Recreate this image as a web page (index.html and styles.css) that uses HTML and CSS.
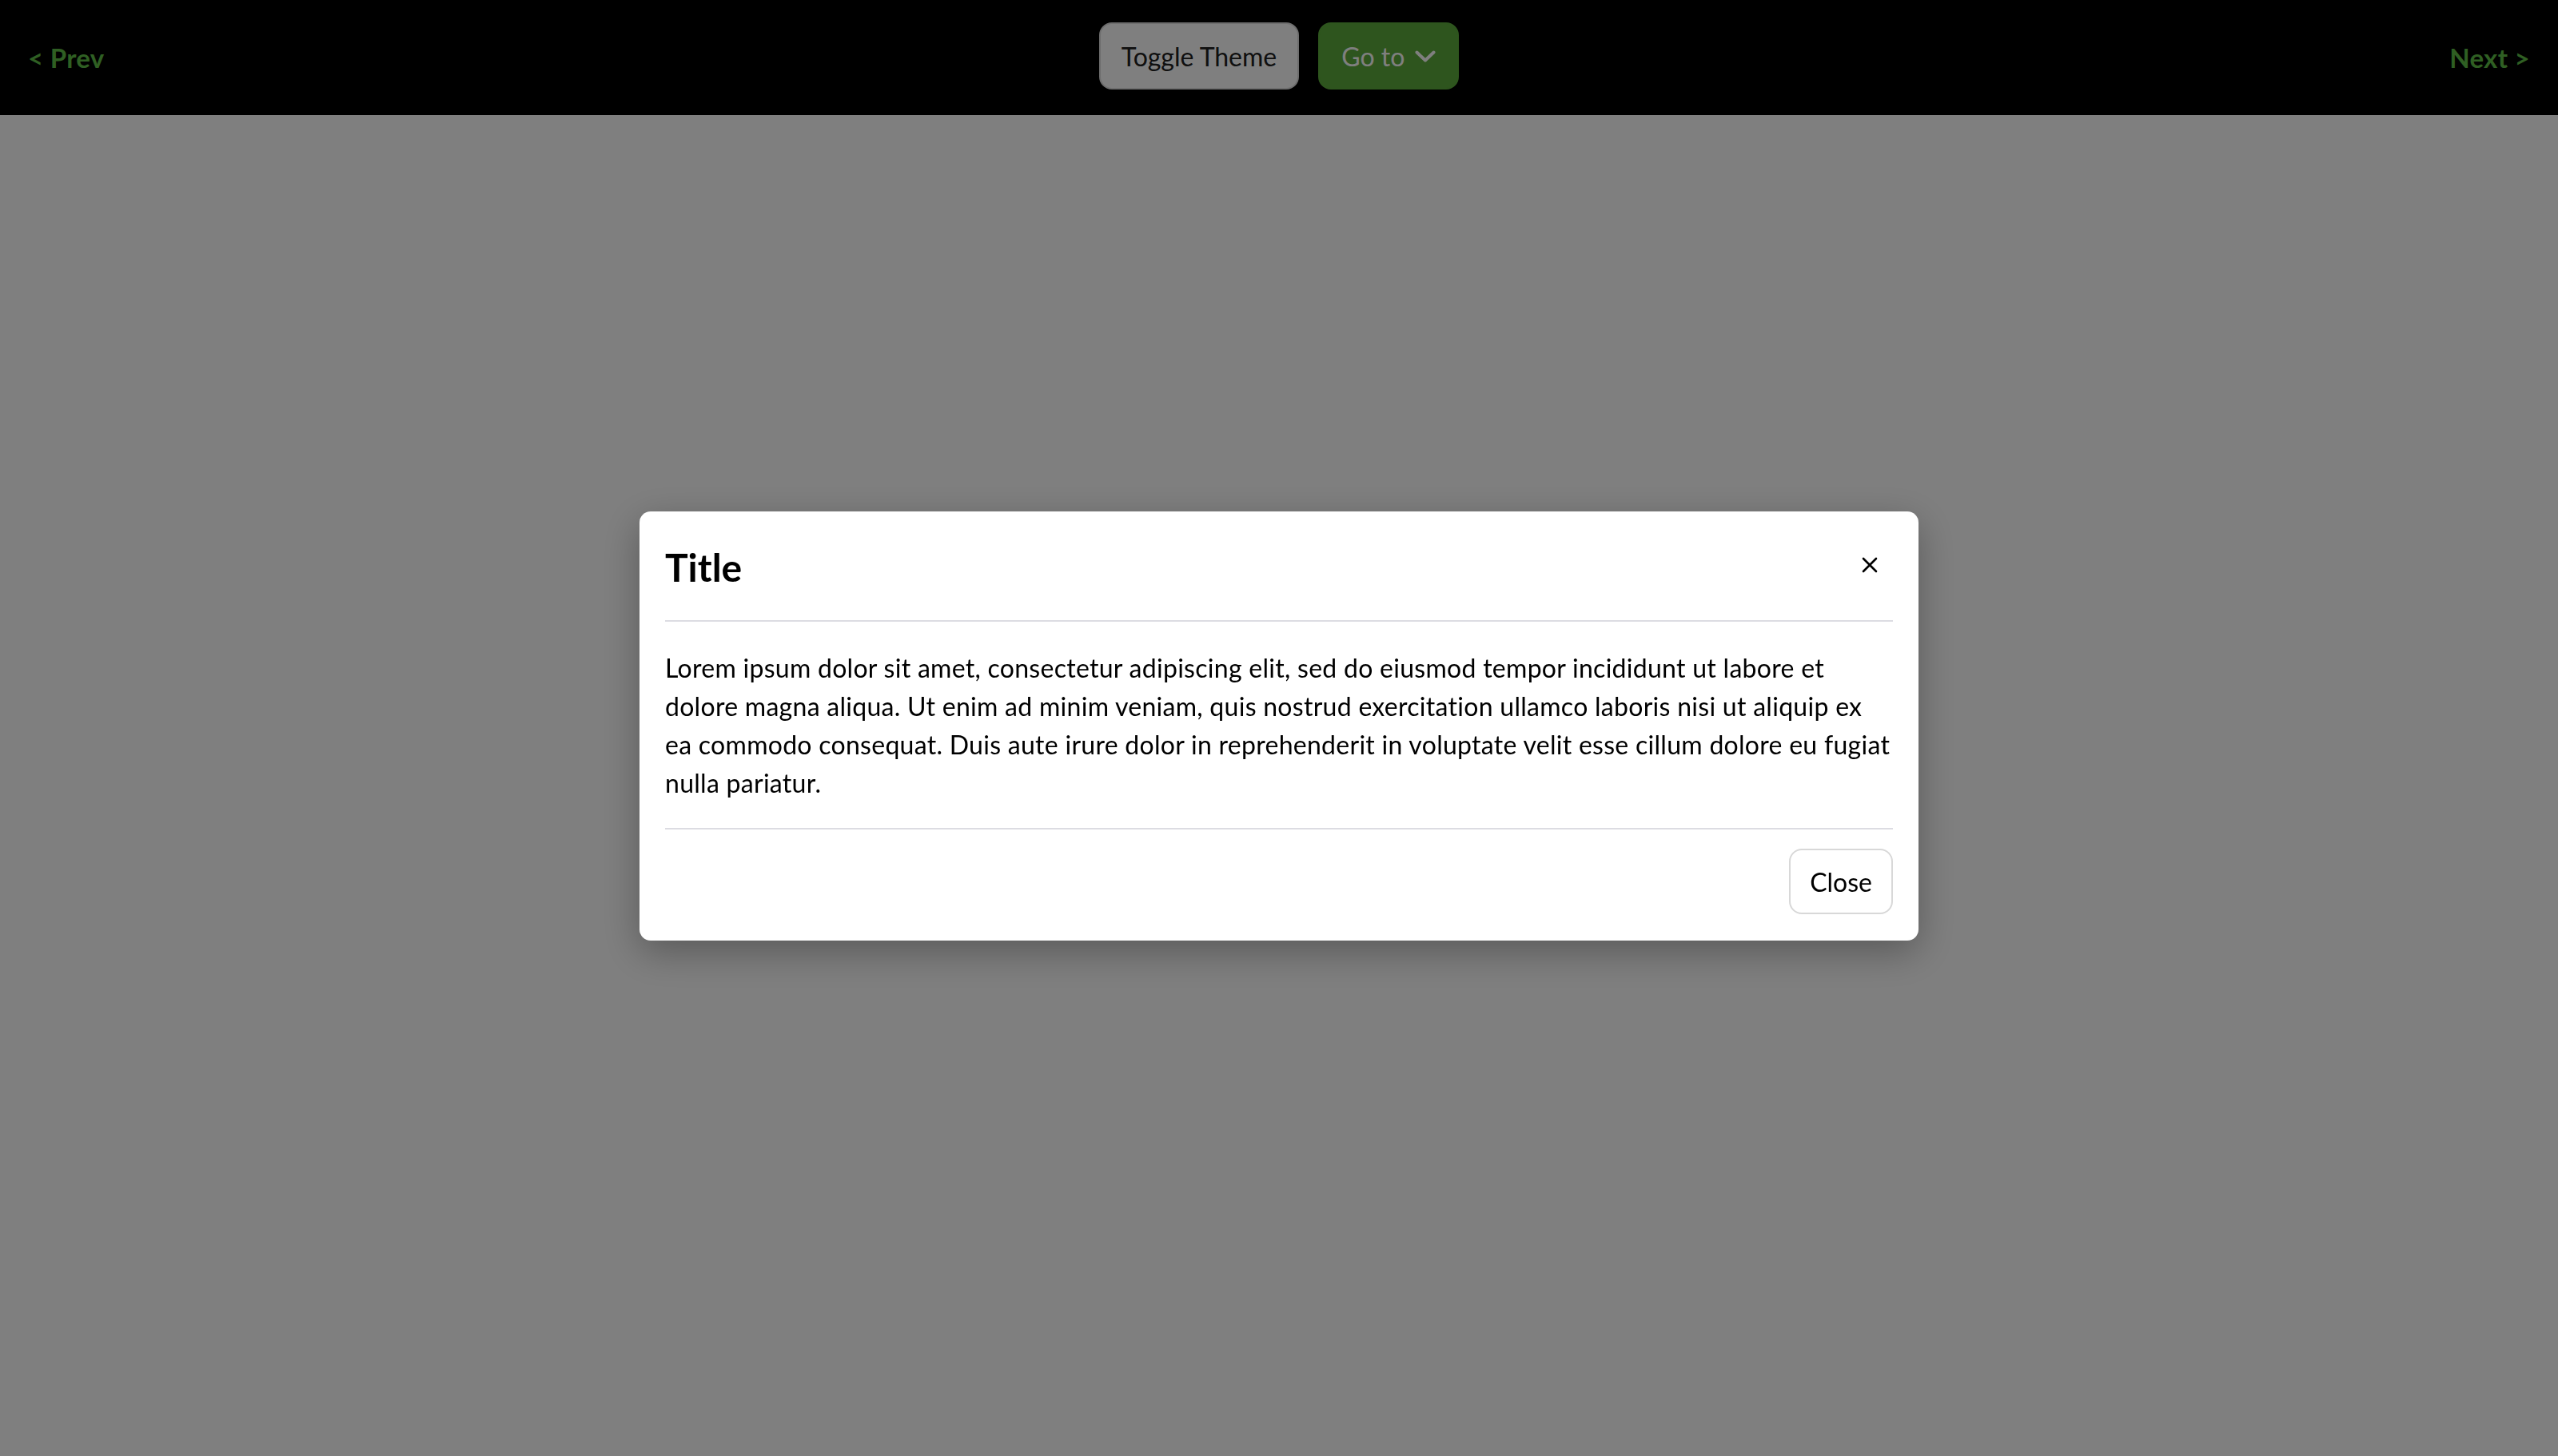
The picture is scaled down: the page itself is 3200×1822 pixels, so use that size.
FILE: index.html
```html
<!DOCTYPE html>
<html lang="en">
<head>
<meta charset="utf-8">
<title>Modal</title>
<link rel="stylesheet" href="styles.css">
</head>
<body>
<header class="topbar">
  <a class="nav-link" href="#">&lt; Prev</a>
  <div class="center-actions">
    <button class="btn btn-toggle" type="button">Toggle Theme</button>
    <button class="btn btn-goto" type="button">Go to
      <svg class="chev" viewBox="0 0 26 16" width="26" height="16"><path d="M2.5 2.5 L13 12.5 L23.5 2.5" fill="none" stroke="currentColor" stroke-width="4" stroke-linecap="round" stroke-linejoin="round"/></svg>
    </button>
  </div>
  <a class="nav-link nav-next" href="#">Next &gt;</a>
</header>
<main class="page"></main>
<div class="backdrop">
  <div class="modal" role="dialog">
    <div class="modal-header">
      <h2 class="modal-title">Title</h2>
      <button class="modal-x" type="button" aria-label="Close">
        <svg viewBox="0 0 20 20" width="20" height="20"><path d="M2 2 L18 18 M18 2 L2 18" fill="none" stroke="#000" stroke-width="2.6" stroke-linecap="round"/></svg>
      </button>
    </div>
    <div class="modal-body">
      <p>Lorem ipsum dolor sit amet, consectetur adipiscing elit, sed do eiusmod tempor incididunt ut labore et dolore magna aliqua. Ut enim ad minim veniam, quis nostrud exercitation ullamco laboris nisi ut aliquip ex ea commodo consequat. Duis aute irure dolor in reprehenderit in voluptate velit esse cillum dolore eu fugiat nulla pariatur.</p>
    </div>
    <div class="modal-footer">
      <button class="btn-close" type="button">Close</button>
    </div>
  </div>
</div>
</body>
</html>
```
FILE: styles.css
```css
* { box-sizing: border-box; }
html, body { margin: 0; padding: 0; }
body {
  font-family: "Segoe UI", Lato, "Noto Sans", sans-serif;
  background: #ffffff;
  color: #000;
}
.topbar {
  height: 144px;
  background: #000;
  display: grid;
  grid-template-columns: 1fr auto 1fr;
  align-items: center;
  padding: 0 35px;
}
.nav-link {
  color: #5ebe46;
  font-weight: 700;
  font-size: 33px;
  text-decoration: none;
  justify-self: start;
  letter-spacing: 0.3px;
}
.nav-next { justify-self: end; }
.center-actions {
  display: flex;
  gap: 24px;
  align-items: center;
  margin-top: -4px;
}
.btn {
  height: 84px;
  border-radius: 16px;
  font-family: inherit;
  font-size: 32px;
  display: flex;
  align-items: center;
  padding: 0 26px;
  cursor: pointer;
}
.btn-toggle {
  background: #ffffff;
  border: 2px solid #dcdcdc;
  color: #212121;
}
.btn-goto {
  background: #5caa3c;
  border: 2px solid #5caa3c;
  color: #ffffff;
  padding: 0 27px;
  gap: 13px;
}
.chev { display: block; width: 26px; height: 16px; margin-top: 2px; }
.page {
  min-height: calc(100vh - 144px);
  background: #ffffff;
}
.backdrop {
  position: fixed;
  inset: 0;
  background: rgba(0, 0, 0, 0.5);
  display: flex;
  align-items: center;
  justify-content: center;
  padding-bottom: 5px;
}
.modal {
  width: 1600px;
  background: #fff;
  border-radius: 14px;
  padding: 0 32px;
  box-shadow: 0 14px 48px rgba(0, 0, 0, 0.3);
}
.modal-header {
  height: 138px;
  border-bottom: 2px solid #dcdce2;
  display: flex;
  align-items: center;
  justify-content: space-between;
}
.modal-title {
  margin: 0;
  font-size: 48px;
  font-weight: 700;
  line-height: 1.2;
  margin-top: 3px;
}
.modal-x {
  background: none;
  border: 0;
  padding: 0;
  margin-right: 19px;
  margin-top: -2px;
  width: 20px;
  height: 20px;
  cursor: pointer;
}
.modal-x svg { display: block; }
.modal-body {
  padding: 34px 0 32px;
}
.modal-body p {
  margin: 0;
  font-size: 32px;
  line-height: 48px;
  letter-spacing: 0.28px;
}
.modal-footer {
  border-top: 2px solid #dcdce2;
  display: flex;
  justify-content: flex-end;
  padding: 24px 0 33px;
}
.btn-close {
  height: 82px;
  padding: 0 24px;
  background: #fff;
  border: 2px solid #d8d8d8;
  border-radius: 16px;
  font-family: inherit;
  font-size: 32px;
  color: #000;
  cursor: pointer;
}
```
